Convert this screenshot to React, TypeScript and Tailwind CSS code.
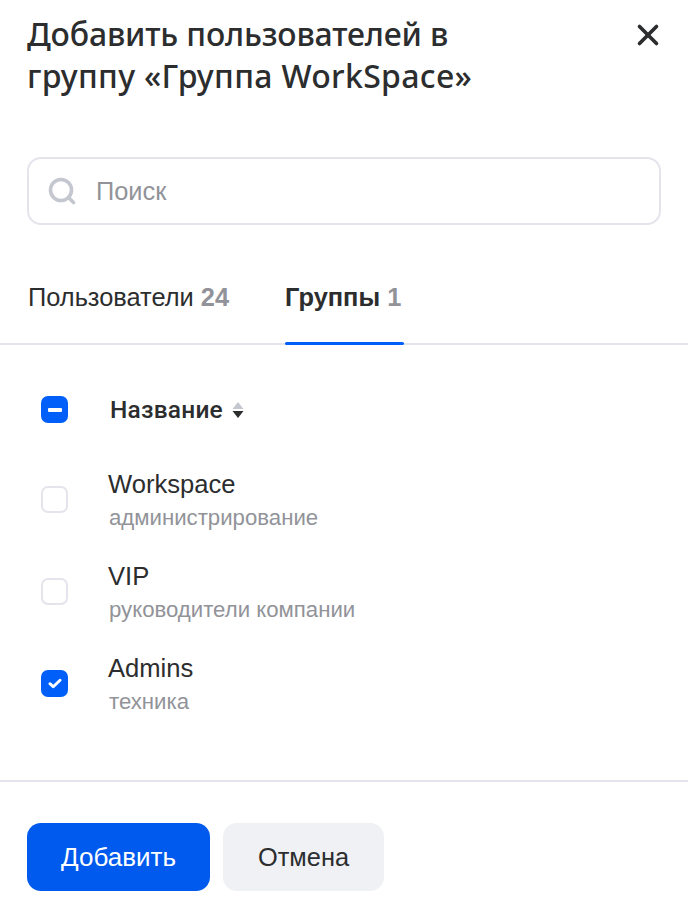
import React from 'react';
import { X } from 'lucide-react';

const sans = 'font-["Liberation_Sans",Arial,sans-serif]';

const rows = [
  { name: 'Workspace', note: 'администрирование', checked: false },
  { name: 'VIP', note: 'руководители компании', checked: false },
  { name: 'Admins', note: 'техника', checked: true },
];

const Checkbox: React.FC<{ state: 'off' | 'on' | 'mixed' }> = ({ state }) => {
  if (state === 'off') {
    return <div className="w-[27px] h-[27px] shrink-0 rounded-[7px] border-2 border-[#e4e5ec] bg-white" />;
  }
  return (
    <div className="w-[27px] h-[27px] shrink-0 rounded-[7px] bg-[#005ff9] flex items-center justify-center">
      {state === 'mixed' ? (
        <div className="w-[14px] h-[4px] rounded-[1px] bg-white" />
      ) : (
        <svg width="14" height="11" viewBox="0 0 15 12" fill="none">
          <path d="M2 6.2 L5.6 9.6 L13 2.4" stroke="white" strokeWidth="3.2" strokeLinecap="round" strokeLinejoin="round" />
        </svg>
      )}
    </div>
  );
};

export default function App() {
  return (
    <div className={`w-[688px] h-[912px] bg-white text-[#2c2d2e] overflow-hidden flex flex-col ${sans}`}>
      {/* Header */}
      <div className="flex justify-between pl-[27px] pr-[23px] pt-[13px] h-[157px]">
        <h2 className='font-["Noto_Sans",sans-serif] font-medium text-[32px] leading-[42px]'>
          <span className="tracking-[-0.17px]">Добавить пользователей в</span>
          <br />
          <span className="tracking-[0.32px]">группу «Группа WorkSpace»</span>
        </h2>
        <X className="w-[34px] h-[34px] mt-[5px] text-[#2c2d2e]" strokeWidth={2.6} />
      </div>

      {/* Search */}
      <div className="px-[27px]">
        <div className="h-[68px] rounded-[14px] border-2 border-[#e4e5ec] flex items-center pl-[19px] gap-[20px]">
          <svg width="28" height="28" viewBox="0 0 28 28" fill="none">
            <circle cx="13" cy="13" r="10.5" stroke="#c4c7cf" strokeWidth="3.6" />
            <path d="M20.5 20.5 L25.5 25.5" stroke="#c4c7cf" strokeWidth="3.6" strokeLinecap="round" />
          </svg>
          <span className="text-[25.4px] text-[#919399]">Поиск</span>
        </div>
      </div>

      {/* Tabs */}
      <div className="mt-[39px] h-[81px] border-b-2 border-[#e4e5ec] flex pl-[28px] text-[25.4px]">
        <div className="h-full pt-[19px] leading-[28px]">
          Пользователи <span className="font-bold text-[#919399]">24</span>
        </div>
        <div className="relative h-full ml-[56px] w-[119px] pt-[19px] leading-[28px] font-bold">
          Группы <span className="text-[#919399]">1</span>
          <div className="absolute left-0 right-0 bottom-[-2px] h-[3px] rounded-full bg-[#005ff9]" />
        </div>
      </div>

      {/* Table header */}
      <div className="mt-[51px] flex items-center pl-[41px] h-[27px]">
        <Checkbox state="mixed" />
        <span className='ml-[42px] pt-px font-["Roboto",sans-serif] text-[24.5px] font-medium tracking-[0.2px]'>Название</span>
        <svg className="ml-[9px]" width="12" height="18" viewBox="0 0 12 18">
          <path d="M6 1 L11.5 8 H0.5 Z" fill="#c4c7cf" />
          <path d="M6 17 L11.5 10 H0.5 Z" fill="#2c2d2e" />
        </svg>
      </div>

      {/* Rows */}
      <div className="mt-[44px] flex flex-col gap-[24px]">
        {rows.map((row) => (
          <div key={row.name} className="flex items-center pl-[41px] h-[68px]">
            <div className="mb-[4px]">
              <Checkbox state={row.checked ? 'on' : 'off'} />
            </div>
            <div className="ml-[40px]">
              <div className="text-[25.6px] leading-[34px]">{row.name}</div>
              <div className="pl-px text-[22.2px] leading-[34px] text-[#919399]">{row.note}</div>
            </div>
          </div>
        ))}
      </div>

      {/* Footer */}
      <div className="mt-[61px] border-t-2 border-[#e4e5ec] pt-[41px] pl-[27px] flex gap-[13px] text-[25.4px]">
        <button className="w-[183px] h-[68px] rounded-[14px] bg-[#005aee] text-white text-[26px]">Добавить</button>
        <button className="w-[161px] h-[68px] rounded-[14px] bg-[#f0f1f5] text-[#2c2d2e]">Отмена</button>
      </div>
    </div>
  );
}
